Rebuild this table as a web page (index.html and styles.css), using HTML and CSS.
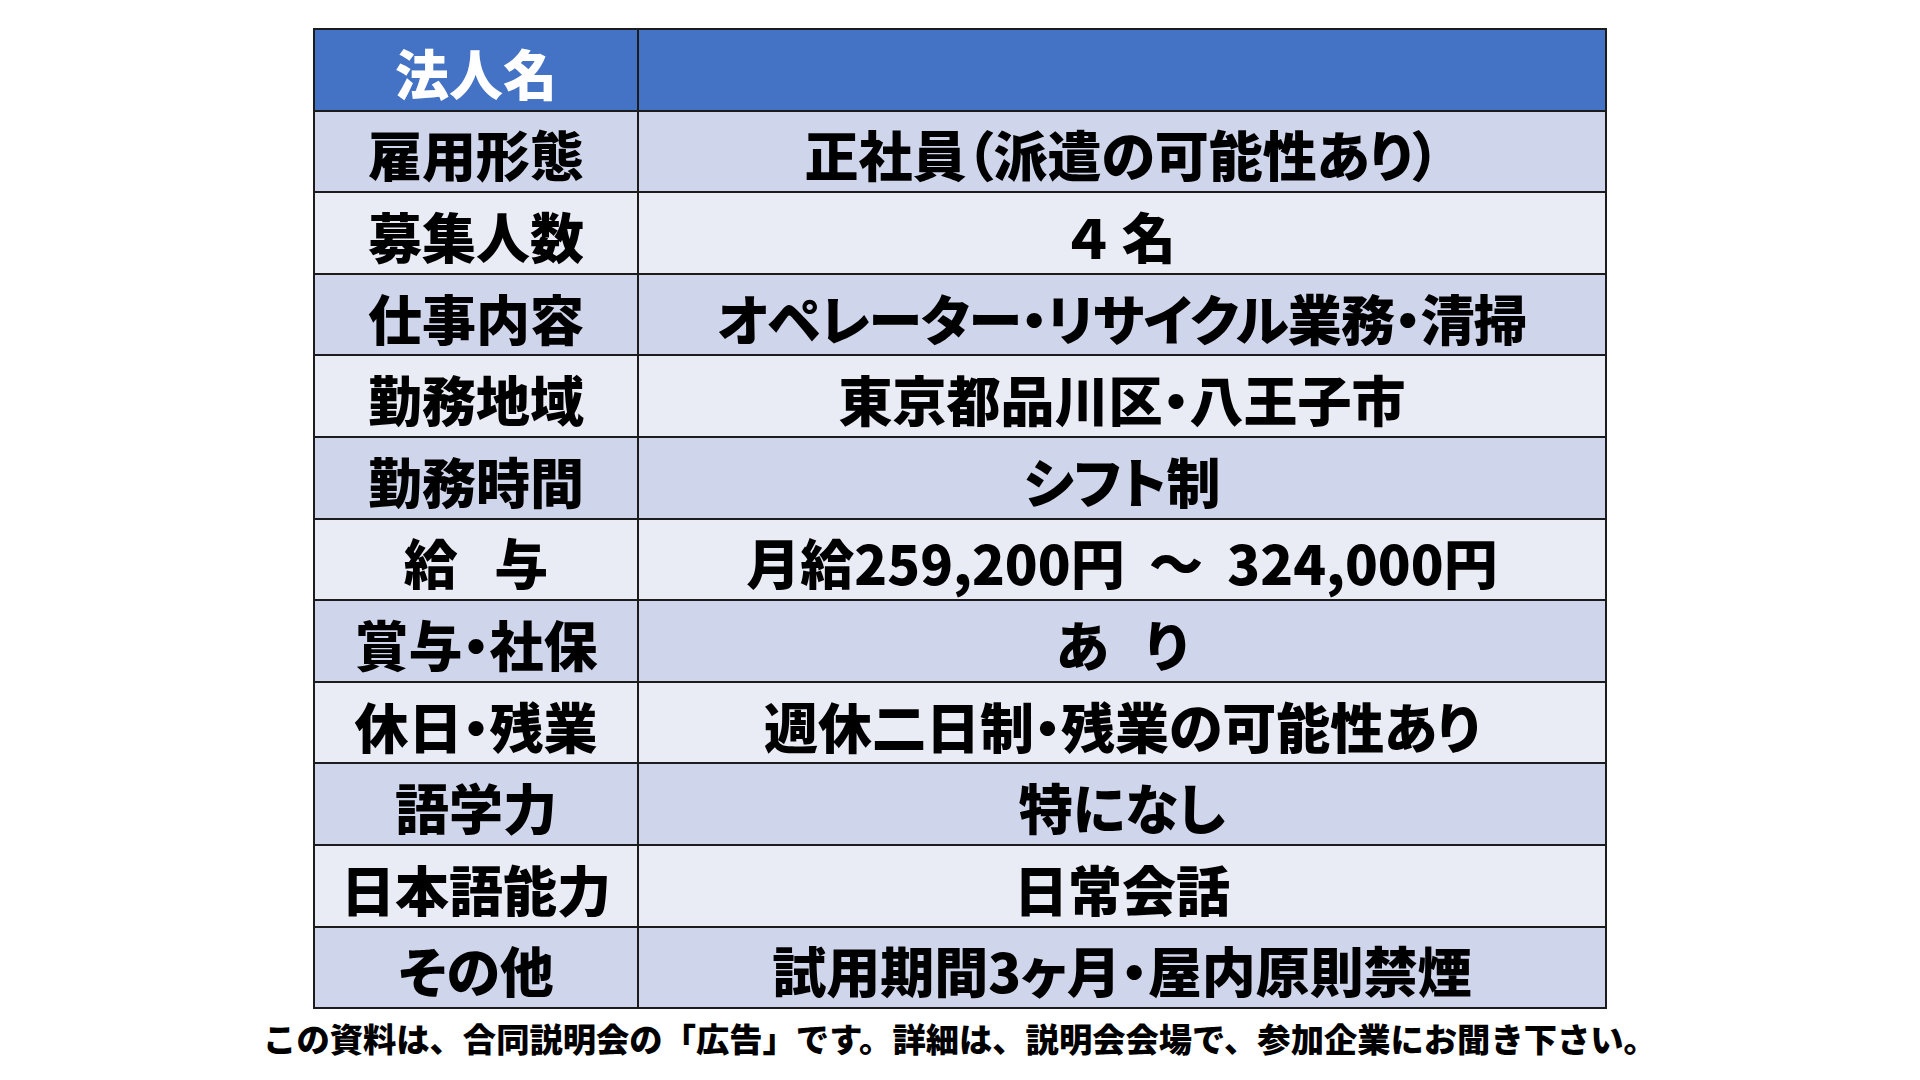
FILE: index.html
```html
<!DOCTYPE html>
<html lang="ja">
<head>
<meta charset="utf-8">
<title>求人情報</title>
<link rel="stylesheet" href="styles.css">
</head>
<body>
<main class="page">
  <table class="jobs">
    <tr class="head"><th class="key">法人名</th><td class="val"></td></tr>
    <tr class="odd"><th class="key">雇用形態</th><td class="val">正社員（派遣の可能性あり）</td></tr>
    <tr class="even"><th class="key">募集人数</th><td class="val">４ 名</td></tr>
    <tr class="odd"><th class="key">仕事内容</th><td class="val tight">オペレーター・リサイクル業務・清掃</td></tr>
    <tr class="even"><th class="key">勤務地域</th><td class="val">東京都品川区・八王子市</td></tr>
    <tr class="odd"><th class="key">勤務時間</th><td class="val">シフト制</td></tr>
    <tr class="even"><th class="key spaced">給 与</th><td class="val salary">月給259,200円 ～ 324,000円</td></tr>
    <tr class="odd"><th class="key">賞与・社保</th><td class="val spaced">あ り</td></tr>
    <tr class="even"><th class="key">休日・残業</th><td class="val">週休二日制・残業の可能性あり</td></tr>
    <tr class="odd"><th class="key">語学力</th><td class="val">特になし</td></tr>
    <tr class="even"><th class="key">日本語能力</th><td class="val">日常会話</td></tr>
    <tr class="odd"><th class="key">その他</th><td class="val">試用期間3ヶ月・屋内原則禁煙</td></tr>
  </table>
  <p class="note">この資料は、合同説明会の「広告」です。詳細は、説明会会場で、参加企業にお聞き下さい。</p>
</main>
</body>
</html>
```
FILE: styles.css
```css
html, body {
  margin: 0;
  padding: 0;
  background: #ffffff;
}
.page {
  width: 1920px;
  height: 1080px;
  display: flex;
  flex-direction: column;
  align-items: center;
  padding-top: 28px;
  box-sizing: border-box;
  font-family: "Noto Sans CJK JP", "Noto Sans", sans-serif;
  color: #000;
}
.jobs {
  border-collapse: collapse;
  width: 1294px;
  table-layout: fixed;
}
.jobs tr {
  height: 81.6px;
}
.jobs th, .jobs td {
  border: 2px solid #1c1c1c;
  padding: 6px 0 0 0;
  text-align: center;
  vertical-align: middle;
  font-weight: 900;
  line-height: 1;
  white-space: nowrap;
}
.key {
  width: 322px;
  font-size: 54px;
  font-feature-settings: "palt";
}
.val {
  font-size: 54px;
  font-feature-settings: "palt";
  padding-top: 10px;
}
.spaced {
  word-spacing: 24px;
}
.tight {
  letter-spacing: -0.8px;
}
.salary {
  word-spacing: 12px;
}
.head th, .head td {
  background: #4472c4;
  color: #ffffff;
}
.odd th, .odd td {
  background: #cfd5ea;
}
.even th, .even td {
  background: #e9ebf5;
}
.note {
  margin: 9px 0 0 0;
  font-size: 33.3px;
  font-weight: 900;
  line-height: 1.2;
  white-space: nowrap;
}
```
